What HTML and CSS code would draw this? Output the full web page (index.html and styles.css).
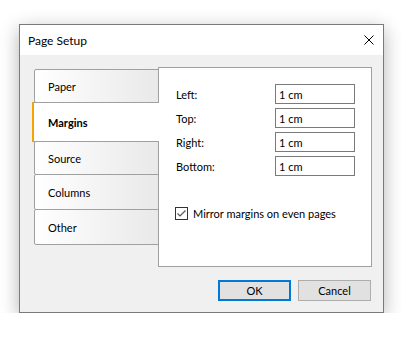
FILE: index.html
```html
<!DOCTYPE html>
<html lang="en">
<head>
    <meta charset="UTF-8">
    <meta name="viewport" content="width=device-width, initial-scale=1.0">
    <title>Page Setup</title>
    <link rel="stylesheet" href="styles.css">
</head>
<body>

    <div class="window">
        <!-- Title bar -->
        <div class="titlebar">
            <span class="title">Page Setup</span>
            <svg class="close" width="10" height="10" viewBox="0 0 10 10">
                <path d="M0.5 0.5 L9.5 9.5 M9.5 0.5 L0.5 9.5" stroke="#000" stroke-width="1" fill="none"/>
            </svg>
        </div>

        <div class="content">
            <div class="main">
                <!-- Tabs on the left -->
                <div class="tabs">
                    <div class="tab tab-paper">Paper</div>
                    <div class="tab tab-margins selected">Margins</div>
                    <div class="tab tab-source">Source</div>
                    <div class="tab tab-columns">Columns</div>
                    <div class="tab tab-other">Other</div>
                </div>

                <!-- Margins page -->
                <div class="panel">
                    <div class="fields">
                        <label for="m-left">Left:</label>
                        <input type="text" id="m-left" value="1 cm">
                        <label for="m-top">Top:</label>
                        <input type="text" id="m-top" value="1 cm">
                        <label for="m-right">Right:</label>
                        <input type="text" id="m-right" value="1 cm">
                        <label for="m-bottom">Bottom:</label>
                        <input type="text" id="m-bottom" value="1 cm">
                    </div>

                    <div class="check">
                        <span class="box">
                            <svg width="11" height="11" viewBox="0 0 11 11">
                                <path d="M1.5 5.5 L4 8 L9.5 2.5" stroke="#555" stroke-width="1.2" fill="none"/>
                            </svg>
                        </span>
                        <span>Mirror margins on even pages</span>
                    </div>
                </div>
            </div>

            <!-- Buttons -->
            <div class="footer">
                <button class="btn btn-default">OK</button>
                <button class="btn">Cancel</button>
            </div>
        </div>
    </div>

</body>
</html>
```

FILE: styles.css
```css
body {
    margin: 0;
    padding: 0;
    background: #fff;
    font-family: Lato, "Open Sans", sans-serif;
    font-size: 11px;
    color: #000;
}
.window {
    margin: 24px 0 0 19px;
    width: 363px;
    height: 287px;
    border: 1px solid #7a7a7a;
    background: #f0f0f0;
    box-shadow: 0 5px 18px rgba(0, 0, 0, 0.3);
    display: flex;
    flex-direction: column;
}
.titlebar {
    height: 30px;
    background: #fff;
    display: flex;
    align-items: center;
    justify-content: space-between;
    padding: 0 9px 0 8px;
}
.title {
    font-size: 12px;
}
.close {
    display: block;
}
.content {
    flex: 1;
    display: flex;
    flex-direction: column;
    padding: 12px 11px 0 14px;
}
.main {
    display: flex;
    height: 200px;
}
.tabs {
    width: 125px;
    margin-right: -1px;
    padding-top: 2px;
    display: flex;
    flex-direction: column;
    position: relative;
    z-index: 1;
}
.tab {
    display: flex;
    align-items: center;
    padding-left: 13px;
    border: 1px solid #a0a0a0;
    border-radius: 2px 0 0 2px;
    background: linear-gradient(to right, #fff 0%, #e9e9e9 100%);
    margin-top: -1px;
    box-sizing: border-box;
}
.tab:first-child {
    margin-top: 0;
}
.tab-paper { height: 34px; }
.tab-margins { height: 40px; }
.tab-source { height: 34px; }
.tab-columns { height: 36px; }
.tab-other { height: 36px; }
.tab.selected {
    background: #fff;
    border-right: none;
    border-left: 2px solid #f5a400;
    border-radius: 0;
    margin-left: -2px;
    padding-left: 14px;
    font-weight: bold;
}
.panel {
    flex: 1;
    border: 1px solid #a0a0a0;
    background: #fff;
    padding: 16px 16px 0 17px;
}
.fields {
    display: grid;
    grid-template-columns: 1fr 80px;
    grid-auto-rows: 20px;
    row-gap: 4px;
    align-items: center;
}
.fields label {
    line-height: 18px;
    padding-top: 2px;
}
.fields input {
    width: 80px;
    height: 20px;
    box-sizing: border-box;
    border: 1px solid #7a7a7a;
    padding: 0 3px;
    margin: 0;
    font-family: inherit;
    font-size: 11px;
    color: #000;
    outline: none;
}
.check {
    display: flex;
    align-items: center;
    gap: 5px;
    margin-top: 31px;
    margin-left: -1px;
}
.check .box {
    width: 13px;
    height: 13px;
    box-sizing: border-box;
    border: 1px solid #333;
    display: flex;
    align-items: center;
    justify-content: center;
}
.check svg {
    display: block;
}
.footer {
    display: flex;
    justify-content: flex-end;
    gap: 7px;
    margin-top: 13px;
    padding-right: 1px;
}
.btn {
    width: 73px;
    height: 21px;
    box-sizing: border-box;
    border: 1px solid #adadad;
    background: #e1e1e1;
    font-family: inherit;
    font-size: 11px;
    color: #000;
    padding: 0;
    margin: 0;
}
.btn-default {
    border: 2px solid #0078d7;
}
```
